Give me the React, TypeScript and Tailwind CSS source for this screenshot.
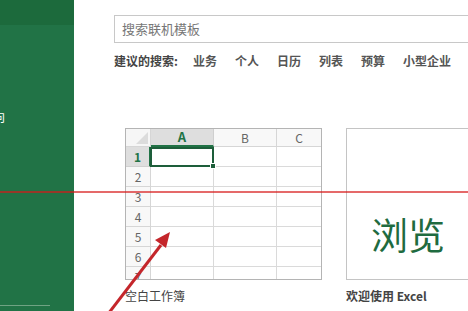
import React from 'react';

const font = { fontFamily: '"Noto Sans CJK SC", "Liberation Sans", sans-serif' };

const suggestions = ['业务', '个人', '日历', '列表', '预算', '小型企业', '教'];
const rows = [1, 2, 3, 4, 5, 6, 7];

// 空白工作簿 缩略图
function SheetThumb() {
  return (
    <div className="w-[197px] h-[152px] border border-[#b4b4b4] bg-white overflow-hidden">
      <div className="grid grid-cols-[25px_63px_63px_1fr] grid-rows-[18px_repeat(7,20px)]">
        {/* 表头 */}
        <div className="relative bg-[#f6f6f6] border-r border-b border-[#d6d6d6]">
          <div className="absolute right-[2px] bottom-[2px] w-0 h-0 border-l-[12px] border-l-transparent border-b-[12px] border-b-[#dcdcdc]" />
        </div>
        <div className="bg-[#dedede] border-r border-b-2 border-b-[#217346] border-r-[#cfcfcf] flex items-center justify-center text-[13px] font-bold text-[#217346]">A</div>
        <div className="bg-[#f8f8f8] border-r border-b border-[#d6d6d6] flex items-center justify-center text-[12px] text-[#666]">B</div>
        <div className="bg-[#f8f8f8] border-b border-[#d6d6d6] flex items-center justify-center text-[12px] text-[#666]">C</div>

        {rows.map((r) => (
          <React.Fragment key={r}>
            <div
              className={
                r === 1
                  ? 'bg-[#dedede] border-r-2 border-r-[#217346] border-b border-b-[#d0d0d0] flex items-center justify-center text-[12px] font-bold text-[#217346]'
                  : 'bg-[#f8f8f8] border-r border-b border-[#d6d6d6] flex items-center justify-center text-[12px] text-[#666]'
              }
            >
              {r}
            </div>
            {r === 1 ? (
              <div className="relative border-2 border-[#1d5e3a] -ml-[1px]">
                <div className="absolute -right-[4px] -bottom-[4px] w-[6px] h-[6px] bg-[#1d5e3a] border border-white" />
              </div>
            ) : (
              <div className="border-r border-b border-[#dadada]" />
            )}
            <div className="border-r border-b border-[#dadada]" />
            <div className="border-b border-[#dadada]" />
          </React.Fragment>
        ))}
      </div>
    </div>
  );
}

export default function App() {
  return (
    <div className="relative w-[468px] h-[311px] overflow-hidden flex bg-white" style={font}>
      {/* 左侧绿色栏 */}
      <div className="w-[74px] shrink-0 bg-[#217346] flex flex-col">
        <div className="h-[25px] bg-[#1c6a3c]" />
        <div className="mt-[86px] -ml-[7px] text-[12px] leading-none text-white">向</div>
        <div className="flex-1" />
        <div className="mb-[5px] h-px w-[50px] bg-[#6fa383]" />
      </div>

      {/* 主区域 */}
      <div className="flex-1 min-w-0 pl-[40px] flex flex-col">
        <div className="mt-[15px] -mr-4 h-[28px] border border-[#c8c8c8] flex items-center pl-[7px] text-[13px] text-[#777]">
          搜索联机模板
        </div>

        <div className="mt-[9px] flex items-center gap-[18px] whitespace-nowrap text-[12px] leading-[17px] font-bold">
          <span className="text-[#444] mr-[-3px]">建议的搜索:</span>
          {suggestions.map((s) => (
            <span key={s} className="text-[#555]">
              {s}
            </span>
          ))}
        </div>

        <div className="mt-[59px] pl-[11px] flex gap-[24px]">
          <div className="flex flex-col shrink-0">
            <SheetThumb />
            <div className="mt-[7px] text-[12px] leading-[17px] text-[#444]">空白工作簿</div>
          </div>
          <div className="flex flex-col w-[160px] shrink-0">
            <div className="h-[152px] border border-[#c4c4c4] flex items-end pl-[24px] pb-[26px]">
              <span className="text-[37px] leading-none text-[#1f6b40]">浏览</span>
            </div>
            <div className="mt-[7px] text-[12px] leading-[17px] font-bold text-[#444]">欢迎使用 Excel</div>
          </div>
        </div>
      </div>

      {/* 标注：红线和箭头 */}
      <div className="absolute left-0 right-0 top-[191px] h-[1.5px] bg-[rgba(215,25,25,0.65)]" />
      <svg className="absolute inset-0 pointer-events-none" width="468" height="311" viewBox="0 0 468 311">
        <line x1="105" y1="318" x2="161" y2="245" stroke="#c4262b" strokeWidth="3" />
        <polygon points="170,232 166,248 155,240" fill="#c4262b" />
      </svg>
    </div>
  );
}
